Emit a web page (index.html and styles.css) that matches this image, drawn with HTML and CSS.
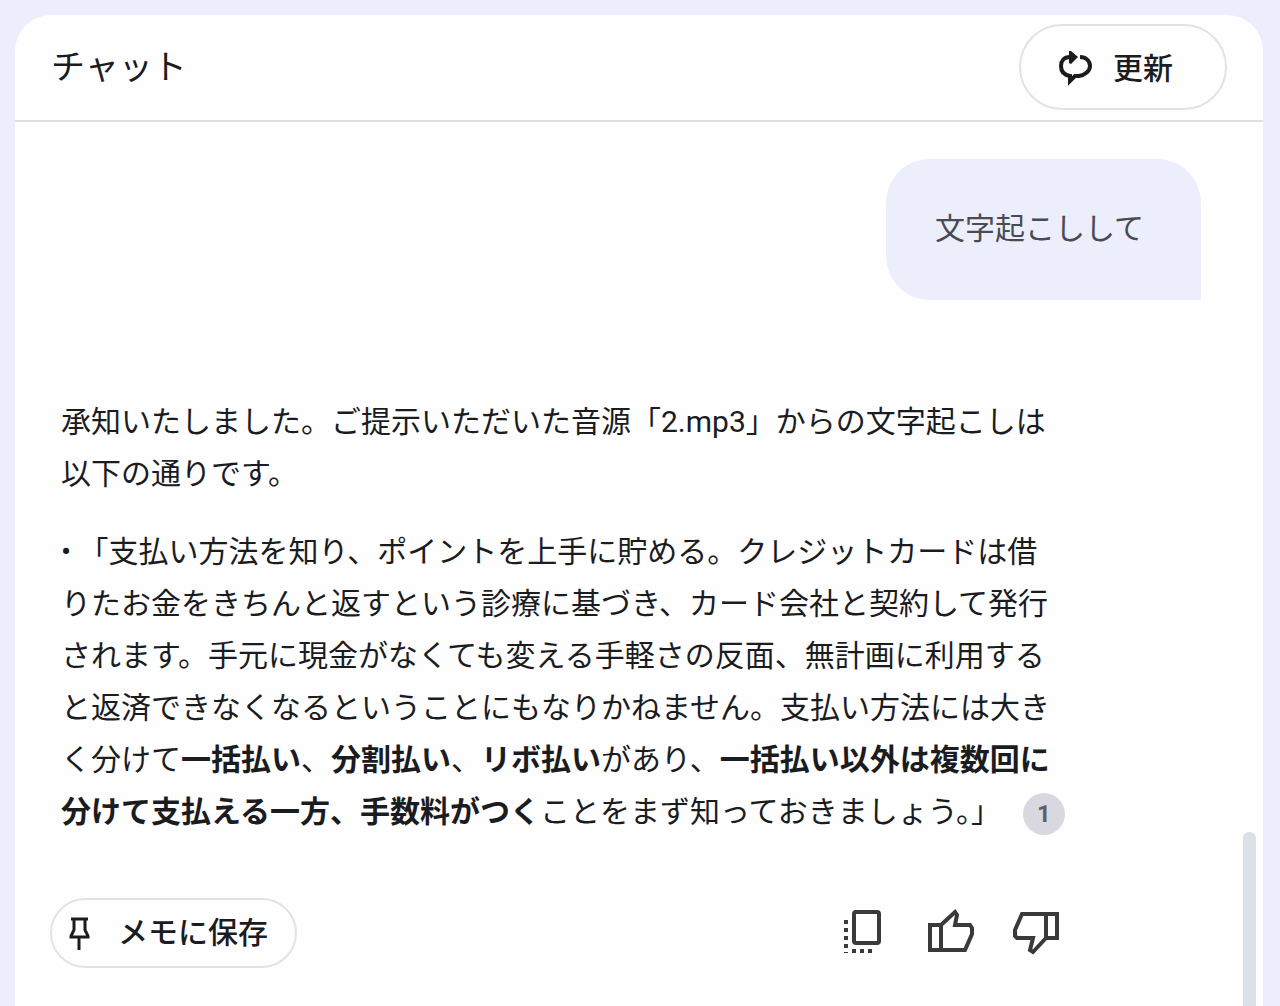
FILE: index.html
```html
<!DOCTYPE html>
<html lang="ja">
  <head>
    <meta charset="utf-8">
    <meta name="viewport" content="width=device-width, initial-scale=1">
    <title>チャット</title>
    <link rel="stylesheet" href="styles.css">
  </head>
  <body>
    <main class="chat-panel">
      <header class="chat-header">
        <h1 class="title">チャット</h1>
        <button type="button" class="pill refresh">
          <svg viewBox="0 0 36 36" width="36" height="36" aria-hidden="true">
            <path d="M17 6H13C7 6 4 10 4 15C4 20 7 24 13 25V30L18 25H22C28 24 33 20 33 15C33 10 29 6 23 6" />
            <path class="solid" d="M12 0L14 0L21 6L14 13L12 12Z" />
            <path class="solid" d="M11 24V34L19 26Z" />
          </svg>
          更新
        </button>
      </header>

      <div class="chat-body">
        <div class="thread">
          <div class="user-message">文字起こしして</div>

          <div class="bot-message">
            <p>承知いたしました。ご提示いただいた音源「2.mp3」からの文字起こしは以下の通りです。</p>
            <p>• 「支払い方法を知り、ポイントを上手に貯める。クレジットカードは借りたお金をきちんと返すという診療に基づき、カード会社と契約して発行されます。手元に現金がなくても変える手軽さの反面、無計画に利用すると返済できなくなるということにもなりかねません。支払い方法には大きく分けて<b>一括払い</b>、<b>分割払い</b>、<b>リボ払い</b>があり、<b>一括払い以外は複数回に分けて支払える一方、手数料がつく</b>ことをまず知っておきましょう。」<button type="button" class="citation">1</button></p>
          </div>

          <div class="actions">
            <button type="button" class="pill save">
              <svg viewBox="0 0 22 34" width="22" height="34" aria-hidden="true">
                <path d="M3 3H20M6 3V14L3 20V21H20V20L17 14V3M11 21V34" />
              </svg>
              メモに保存
            </button>
            <div class="feedback">
              <button type="button" class="icon-button" aria-label="コピー">
                <svg viewBox="0 0 46 46" width="46" height="46" aria-hidden="true">
                  <rect x="10" y="2" width="25" height="31" rx="2" />
                  <path class="dots" d="M2 10V43M8 41H28" />
                </svg>
              </button>
              <button type="button" class="icon-button" aria-label="良い回答">
                <svg viewBox="0 0 46 46" width="46" height="46" aria-hidden="true">
                  <path d="M1 15H12V40H1ZM12 15L26 2L28 5L26 15H41L43 18V24L36 40H12" />
                </svg>
              </button>
              <button type="button" class="icon-button" aria-label="悪い回答">
                <svg viewBox="0 0 46 46" width="46" height="46" aria-hidden="true">
                  <path d="M43 4H32V28H43ZM32 28L19 42L16 40L19 28H3L1 26V20L8 4H32" />
                </svg>
              </button>
            </div>
          </div>
        </div>
        <div class="scrollbar"><div class="thumb"></div></div>
      </div>
    </main>
  </body>
</html>
```
FILE: styles.css
```css
* {
  box-sizing: border-box;
}

body {
  margin: 0;
  min-height: 100vh;
  display: flex;
  padding: 15px 17px 0 15px;
  background: #eceefb;
  color: #1b1c1f;
  font-family: Roboto, "Noto Sans CJK JP", sans-serif;
  font-size: 30px;
  line-height: 52px;
}

button {
  font: inherit;
  color: inherit;
  cursor: pointer;
}

svg {
  flex: none;
  overflow: visible;
  fill: none;
  stroke: currentColor;
  stroke-width: 4;
}

.chat-panel {
  flex: 1;
  display: flex;
  flex-direction: column;
  background: #fefefe;
  border-radius: 36px 36px 0 0;
}

.chat-header {
  display: flex;
  align-items: center;
  justify-content: space-between;
  padding: 9px 36px 10px;
  border-bottom: 2px solid #dfdfe1;
}

.title {
  margin: 0;
  font-size: 34px;
  font-weight: 400;
}

.pill {
  display: flex;
  align-items: center;
  background: transparent;
  border: 2px solid #e2e3e6;
  border-radius: 44px;
  font-weight: 500;
}

.refresh {
  gap: 20px;
  padding: 17px 52px 13px 36px;
}

.save svg {
  stroke-width: 3;
}

.solid {
  fill: currentColor;
  stroke: none;
}

.chat-body {
  flex: 1;
  display: flex;
}

.thread {
  flex: 1;
  display: flex;
  flex-direction: column;
  padding: 37px 42px 36px 46px;
}

.user-message {
  align-self: flex-end;
  padding: 44px 57px 45px 49px;
  background: #eceefb;
  border-radius: 44px 44px 0 44px;
  color: #4a4b52;
}

.bot-message {
  max-width: 1006px;
  margin-top: 96px;
}

.bot-message p {
  margin: 0 0 26px;
}

.citation {
  width: 42px;
  height: 42px;
  margin-left: 22px;
  padding: 0;
  border: none;
  border-radius: 50%;
  background: #d9d7e0;
  color: #5f5e6b;
  font-size: 24px;
  font-weight: 700;
  line-height: 42px;
  vertical-align: middle;
}

.actions {
  display: flex;
  align-items: center;
  justify-content: space-between;
  max-width: 1010px;
  margin-top: 34px;
  margin-left: -11px;
}

.save {
  gap: 28px;
  padding: 7px 27px 7px 16px;
}

.feedback {
  display: flex;
  gap: 39px;
}

.icon-button {
  display: flex;
  padding: 0;
  border: none;
  background: none;
  color: #3a3a3d;
}

.dots {
  stroke-dasharray: 4 4;
}

.scrollbar {
  display: flex;
  align-items: flex-end;
  padding-right: 7px;
}

.thumb {
  width: 13px;
  height: 174px;
  border-radius: 6px 6px 0 0;
  background: #dce0e8;
}
```
